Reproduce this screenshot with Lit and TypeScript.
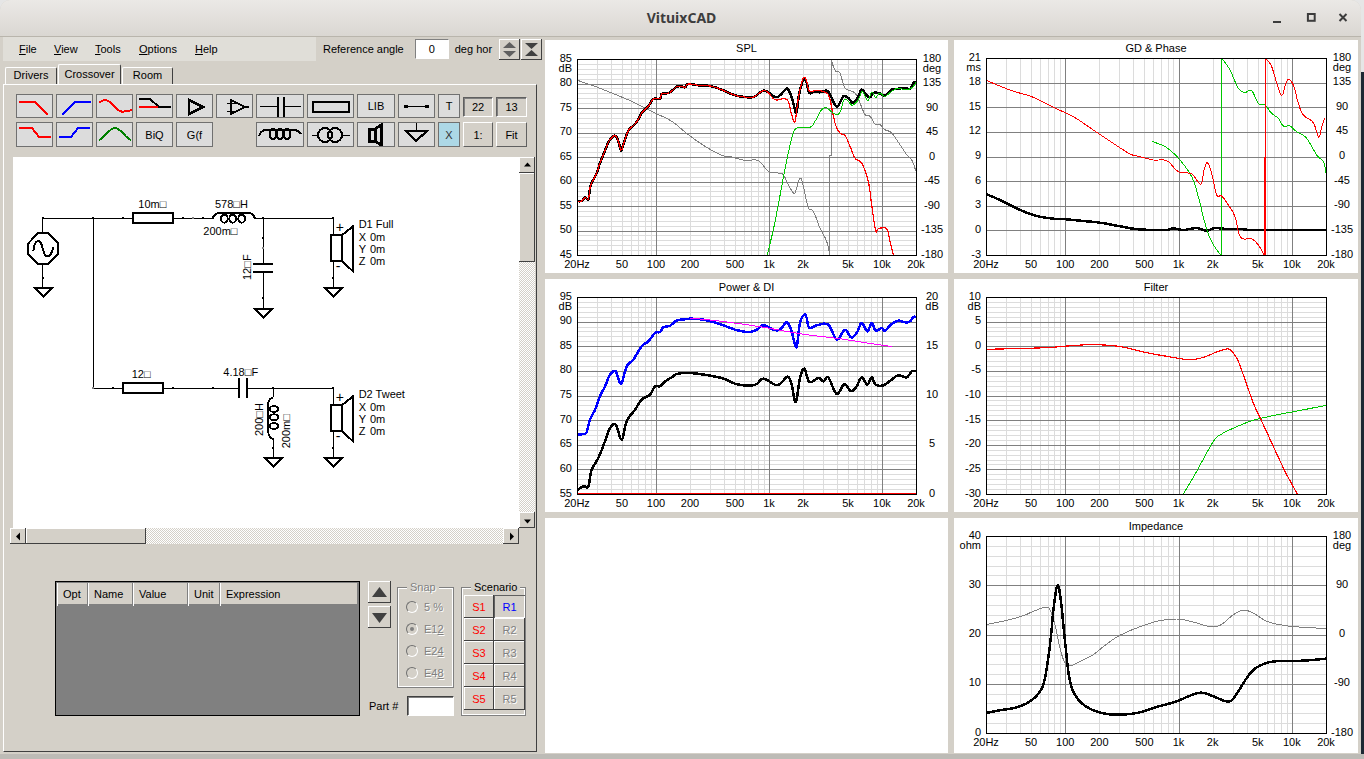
import { LitElement, html, svg, css } from "lit";
import { customElement } from "lit/decorators.js";

type P = number[];
interface Series { c: string; w: number; p: P[]; }
interface ChartCfg {
  title: string; x: number; y: number; w: number; h: number;
  px: number; py: number; pw: number; ph: number;
  left: string[]; leftUnit: string; right: string[]; rightUnit: string;
  major: number; minor: number; oz: number[]; series: Series[];
}

const RED = "#ff0000", GREEN = "#00c800", BLACK = "#000000", GRAY = "#808080", BLUE = "#0000ff", MAG = "#ff00ff";
const THICK = 2.5;

const splBlack: P[] = [[97,489],[110,489],[120,478],[130,484],[136,445],[145,425],[155,405],[165,375],[175,350],[185,325],[195,305],[210,293],[220,310],[228,338],[235,320],[247,285],[255,272],[270,258],[282,240],[292,222],[310,205],[325,183],[345,182],[350,168],[370,165],[385,155],[395,146],[410,145],[420,148],[430,138],[460,142],[495,144],[530,155],[570,172],[610,178],[630,175],[650,160],[665,160],[690,177],[705,172],[725,152],[735,165],[745,195],[754,225],[762,170],[775,125],[785,135],[793,165],[810,160],[825,163],[845,158],[855,170],[870,200],[880,203],[895,175],[910,180],[925,195],[940,175],[950,155],[965,172],[975,178],[985,165],[1000,165],[1020,172],[1040,155],[1060,152],[1080,150],[1095,153],[1105,135],[1113,135]];
const splRed: P[] = [...splBlack.slice(0, 38), [690,185],[715,182],[730,190],[740,230],[750,250],[760,180],[775,120],[785,130],[793,160],[815,157],[845,165],[855,185],[870,255],[885,285],[900,292],[915,325],[930,360],[945,370],[955,385],[970,430],[980,500],[992,578],[1000,572],[1025,572],[1035,610],[1045,650]];
const splGreen: P[] = [[667,650],[685,575],[700,500],[715,420],[730,345],[745,285],[760,268],[795,268],[810,250],[830,215],[845,210],[860,222],[878,230],[888,215],[897,185],[910,190],[922,202],[940,185],[952,160],[968,188],[980,162],[992,178],[1005,165],[1020,175],[1040,160],[1060,150],[1080,155],[1100,150],[1113,133]];
const splGray: P[] = [[97,127],[150,145],[200,165],[260,190],[320,220],[380,250],[430,290],[480,325],[530,352],[560,357],[600,367],[640,368],[670,400],[700,405],[715,410],[730,440],[745,465],[752,460],[765,420],[775,445],[790,510],[805,520],[825,570],[845,610],[854,650],[854,353],[858,353],[858,62],[870,97],[885,105],[900,150],[930,165],[945,195],[960,230],[975,235],[990,258],[1005,260],[1020,275],[1040,285],[1065,320],[1085,350],[1100,365],[1113,400]];

const gdRed: P[] = [[108,241],[180,270],[250,292],[310,322],[370,350],[430,390],[490,430],[540,462],[570,470],[610,480],[650,482],[685,515],[725,522],[752,553],[762,510],[772,488],[785,520],[800,585],[815,588],[835,615],[855,650],[872,712],[905,717],[925,735],[943,765]];
const gdRed2: P[] = [[947,175],[965,200],[985,265],[997,285],[1012,240],[1030,255],[1045,310],[1060,345],[1090,368],[1106,412],[1115,380],[1124,355]];
const gdGreen: P[] = [[605,424],[640,437],[665,455],[690,480],[725,530],[745,590],[765,670],[785,725],[812,765]];
const gdGreen2: P[] = [[818,178],[840,210],[865,265],[885,277],[905,272],[925,310],[945,315],[965,340],[985,355],[1000,378],[1020,378],[1040,395],[1070,415],[1100,465],[1120,485],[1128,518]];
const gdBlack: P[] = [[108,582],[150,600],[200,625],[250,645],[300,655],[350,658],[400,663],[450,668],[500,677],[550,686],[600,690],[650,690],[670,685],[700,690],[740,684],[770,692],[795,684],[830,687],[885,687],[900,690],[1128,690]];

const pwBlue: P[] = [[97,470],[115,468],[125,462],[135,425],[150,395],[165,355],[180,325],[195,290],[212,280],[228,318],[245,265],[265,245],[290,205],[310,190],[330,165],[345,162],[355,148],[375,143],[395,128],[420,124],[440,122],[480,126],[530,140],[570,155],[610,162],[635,155],[655,142],[685,155],[705,155],[725,133],[740,160],[754,208],[765,135],[778,110],[785,120],[793,150],[815,142],[850,140],[875,185],[900,155],[918,178],[935,165],[950,135],[967,160],[980,135],[992,158],[1010,150],[1020,158],[1040,138],[1060,128],[1080,133],[1095,130],[1105,117],[1113,117]];
const pwMag: P[] = [[435,120],[530,130],[650,147],[770,168],[890,183],[1000,200],[1040,205]];
const pwBlack: P[] = [[97,637],[115,625],[130,625],[140,575],[160,540],[180,490],[195,450],[212,440],[230,485],[245,430],[270,395],[290,365],[315,350],[330,325],[345,325],[360,310],[380,298],[395,288],[430,285],[470,289],[530,300],[570,317],[610,323],[635,318],[655,302],[690,320],[705,318],[728,296],[740,320],[752,372],[765,300],[778,272],[793,312],[820,300],[835,310],[850,298],[875,348],[898,318],[918,340],[935,325],[950,298],[967,320],[980,298],[992,320],[1015,322],[1040,305],[1060,292],[1085,298],[1100,280],[1113,280]];

const fRed: P[] = [[108,214],[190,212],[290,209],[340,205],[420,200],[490,203],[540,212],[600,226],[680,240],[720,245],[760,238],[800,222],[825,214],[840,215],[860,240],[880,290],[910,375],[940,440],[970,505],[1005,580],[1042,648]];
const fGreen: P[] = [[700,648],[740,580],[790,490],[815,468],[840,455],[900,430],[950,417],[1020,403],[1130,382]];

const zBlack: P[] = [[108,585],[150,577],[200,568],[240,550],[270,520],[285,480],[300,380],[312,260],[323,202],[333,250],[345,370],[360,490],[385,545],[420,572],[460,586],[505,590],[560,585],[620,567],[680,550],[720,533],[755,524],[790,535],[825,549],[845,547],[865,520],[890,480],[915,452],[950,435],[990,429],[1060,428],[1128,422]];
const zGray: P[] = [[108,320],[170,307],[220,293],[250,280],[285,268],[300,275],[315,320],[330,390],[345,435],[365,442],[400,425],[430,410],[470,378],[510,352],[560,330],[620,310],[680,303],[730,312],[775,325],[810,322],[850,290],[880,277],[910,285],[950,310],[1000,322],[1060,328],[1128,331]];

const CHARTS: ChartCfg[] = [
  { title: "SPL", x: 545, y: 40, w: 403, h: 233, px: 577, py: 59, pw: 339, ph: 196,
    left: ["85","80","75","70","65","60","55","50","45"], leftUnit: "dB",
    right: ["180","135","90","45","0","-45","-90","-135","-180"], rightUnit: "deg",
    major: 8, minor: 5, oz: [545,38],
    series: [{c:GRAY,w:1,p:splGray},{c:BLACK,w:THICK,p:splBlack},{c:RED,w:1.2,p:splRed},{c:GREEN,w:1,p:splGreen}] },
  { title: "GD & Phase", x: 954, y: 40, w: 404, h: 233, px: 986, py: 58, pw: 340, ph: 197,
    left: ["21","18","15","12","9","6","3","0","-3"], leftUnit: "ms",
    right: ["180","135","90","45","0","-45","-90","-135","-180"], rightUnit: "deg",
    major: 8, minor: 1, oz: [950,0],
    series: [
      {c:BLACK,w:THICK,p:gdBlack},
      {c:GREEN,w:1,p:gdGreen},{c:GREEN,w:1.2,p:[[814.5,765],[814.5,175]]},{c:GREEN,w:1,p:gdGreen2},
      {c:RED,w:1,p:gdRed},{c:RED,w:1.2,p:[[946.5,470],[946.5,175]]},{c:RED,w:2,p:[[945,765],[945,470]]},{c:RED,w:1,p:gdRed2},
    ] },
  { title: "Power & DI", x: 545, y: 279, w: 403, h: 233, px: 577, py: 297, pw: 339, ph: 197,
    left: ["95","90","85","80","75","70","65","60","55"], leftUnit: "dB",
    right: ["20","","15","","10","","5","","0"], rightUnit: "dB",
    major: 8, minor: 5, oz: [545,278],
    series: [{c:RED,w:2,p:[[97,647],[1113,647]]},{c:BLACK,w:THICK,p:pwBlack},{c:BLUE,w:THICK,p:pwBlue},{c:MAG,w:1,p:pwMag}] },
  { title: "Filter", x: 954, y: 279, w: 404, h: 233, px: 986, py: 297, pw: 340, ph: 197,
    left: ["10","5","0","-5","-10","-15","-20","-25","-30"], leftUnit: "dB",
    right: [], rightUnit: "",
    major: 8, minor: 5, oz: [950,278],
    series: [{c:GREEN,w:1,p:fGreen},{c:RED,w:1.2,p:fRed}] },
  { title: "Impedance", x: 954, y: 518, w: 404, h: 235, px: 986, py: 536, pw: 340, ph: 197,
    left: ["40","30","20","10","0"], leftUnit: "ohm",
    right: ["180","90","0","-90","-180"], rightUnit: "deg",
    major: 4, minor: 5, oz: [950,518],
    series: [{c:GRAY,w:1,p:zGray},{c:BLACK,w:THICK,p:zBlack}] },
];

const MINOR_F = [30,40,50,60,70,80,90,200,300,400,500,600,700,800,900,2000,3000,4000,5000,6000,7000,8000,9000];
const MAJOR_F = [100,1000,10000];
const XLAB: [string, number][] = [["20Hz",20],["50",50],["100",100],["200",200],["500",500],["1k",1000],["2k",2000],["5k",5000],["10k",10000],["20k",20000]];

/* Catmull-Rom resampling of traced points; vertical phase wraps stay straight. */
function smooth(pts: P[]): P[] {
  const runs: P[][] = [];
  let cur: P[] = [pts[0]];
  for (let i = 1; i < pts.length; i++) {
    const a = pts[i - 1], b = pts[i];
    if (Math.abs(b[0] - a[0]) < 5 && Math.abs(b[1] - a[1]) > 100) { runs.push(cur); cur = [b]; } else cur.push(b);
  }
  runs.push(cur);
  const out: P[] = [];
  for (const r of runs) {
    for (let i = 0; i < r.length - 1; i++) {
      const p0 = r[Math.max(0, i - 1)], p1 = r[i], p2 = r[i + 1], p3 = r[Math.min(r.length - 1, i + 2)];
      for (let k = 0; k < 5; k++) {
        const t = k / 5, t2 = t * t, t3 = t2 * t;
        const f = (j: number) => 0.5 * (2 * p1[j] + (p2[j] - p0[j]) * t + (2 * p0[j] - 5 * p1[j] + 4 * p2[j] - p3[j]) * t2 + (3 * p1[j] - p0[j] - 3 * p2[j] + p3[j]) * t3);
        out.push([f(0), f(1)]);
      }
    }
    out.push(r[r.length - 1]);
  }
  return out;
}

function chart(c: ChartCfg) {
  const fx = (f: number) => Math.round(c.px + (c.pw * Math.log10(f / 20)) / 3) + 0.5;
  const right = c.px + c.pw, bottom = c.py + c.ph;
  const hy = (i: number) => Math.round(c.py + (c.ph * i) / c.major) + 0.5;
  const minors: number[] = [];
  if (c.minor > 1) for (let i = 0; i < c.major * c.minor; i++) if (i % c.minor) minors.push(Math.round(c.py + (c.ph * i) / (c.major * c.minor)) + 0.5);
  return html`<div class="panel">
    <svg class="plot" width=${c.w} height=${c.h} viewBox="${c.x} ${c.y} ${c.w} ${c.h}">
      <text class="t" x=${c.px + c.pw / 2} y=${c.y + 12} text-anchor="middle">${c.title}</text>
      <g shape-rendering="crispEdges" stroke-width="1">
        ${minors.map((y) => svg`<line x1=${c.px} x2=${right} y1=${y} y2=${y} stroke="#dcdcdc"/>`)}
        ${MINOR_F.map((f) => svg`<line x1=${fx(f)} x2=${fx(f)} y1=${c.py} y2=${bottom} stroke="#dcdcdc"/>`)}
        ${Array.from({ length: c.major - 1 }, (_, i) => svg`<line x1=${c.px} x2=${right} y1=${hy(i + 1)} y2=${hy(i + 1)} stroke="#808080"/>`)}
        ${MAJOR_F.map((f) => svg`<line x1=${fx(f)} x2=${fx(f)} y1=${c.py} y2=${bottom} stroke="#808080"/>`)}
      </g>
      ${c.series.map((s) => svg`<polyline fill="none" stroke=${s.c} stroke-width=${s.w} stroke-linejoin="round" shape-rendering="crispEdges"
        points=${smooth(s.p).map((p) => `${(c.oz[0] + p[0] / 3).toFixed(1)},${(c.oz[1] + p[1] / 3).toFixed(1)}`).join(" ")}/>`)}
      <rect x=${c.px + 0.5} y=${c.py + 0.5} width=${c.pw} height=${c.ph} fill="none" stroke="#000" shape-rendering="crispEdges"/>
      ${c.left.map((t, i) => svg`<text class="t" x=${c.px - 5} y=${c.py + (c.ph * i) / (c.left.length - 1) + 2.5} text-anchor="end">${t}</text>`)}
      <text class="t" x=${c.px - 5} y=${c.py + 12.5} text-anchor="end">${c.leftUnit}</text>
      ${c.right.map((t, i) => svg`<text class="t" x=${right + 16} y=${c.py + (c.ph * i) / (c.right.length - 1) + 2.5} text-anchor="middle">${t}</text>`)}
      <text class="t" x=${right + 16} y=${c.py + 12.5} text-anchor="middle">${c.rightUnit}</text>
      ${XLAB.map(([t, f]) => svg`<text class="t" x=${c.px + (c.pw * Math.log10(f / 20)) / 3} y=${bottom + 13} text-anchor="middle">${t}</text>`)}
    </svg>
  </div>`;
}

const ic = (body: unknown, w = 37, h = 24) => html`<svg class="ic" width=${w} height=${h} viewBox="0 0 ${w} ${h}" fill="none" stroke-width="2" shape-rendering="crispEdges">${body}</svg>`;
const line = (pts: string, col: string, w = 2) => svg`<polyline points=${pts} fill="none" stroke=${col} stroke-width=${w}/>`;

const TOOL_ROW1 = [
  ic(line("3,8 19,8 32,21", "#f00")),
  ic(line("6,21 19,8 35,8", "#00f")),
  ic(svg`<path d="M3 9C8 4 13 6 18 12S25 19 36 16" stroke="#f00"/>`),
  ic(svg`${line("3,5 14,5 23,13 35,13", "#000")}${line("3,13 22,13", "#f00")}`),
  ic(svg`<polygon points="13,6 27,13 13,20" stroke="#000" stroke-width="2.4"/>`),
  ic(svg`<polygon points="15,6 29,13 15,20" stroke="#000" stroke-width="2"/>${line("29,13 33,13", "#000")}${line("11,9 20,9", "#000", 1)}${line("11,17 20,17", "#000", 1)}${line("15,5 15,13", "#000", 1)}${line("15,14 15,21", "#000", 1)}`),
  ic(svg`${line("4,12.5 21,12.5", "#000", 1)}${line("28,12.5 45,12.5", "#000", 1)}${line("21.5,3 21.5,23", "#000")}${line("28,3 28,23", "#000")}`, 48, 24),
  ic(svg`<rect x="6" y="8" width="36" height="10" stroke="#000"/>`, 47, 24),
];
const TOOL_ROW2 = [
  ic(line("3,5 16,5 23,14 35,14", "#f00")),
  ic(line("3,14 15,14 22,5 34,5", "#00f")),
  ic(svg`<path d="M3 17C9 15 13 5 19 5S29 15 35 17" stroke="#008000"/>`),
];

const speaker = (dy: number) => svg`
  <line x1="970" y1=${175 + dy} x2="970" y2=${225 + dy} stroke="#000" stroke-width="3"/>
  <rect x="964" y=${226 + dy} width="31" height="77" fill="#fff" stroke="#000" stroke-width="6"/>
  <polygon points="995,${226 + dy} 1029,${199 + dy} 1029,${334 + dy} 995,${303 + dy}" fill="#fff" stroke="#000" stroke-width="6"/>
  <line x1="970" y1=${303 + dy} x2="970" y2=${380 + dy} stroke="#000" stroke-width="3"/>
  <text class="pm" x="977" y=${217 + dy}>+</text>
  <text class="pm" x="977" y=${334 + dy}>-</text>`;
const ground = (x: number, y: number) => svg`<polygon points="${x - 24},${y} ${x + 26},${y} ${x},${y + 25}" fill="none" stroke="#000" stroke-width="6"/>`;
const dot = (x: number, y: number, c = "#000") => svg`<rect x=${x - 3} y=${y - 3} width="6" height="6" fill=${c}/>`;
const wire = (x1: number, y1: number, x2: number, y2: number) => svg`<line x1=${x1} y1=${y1} x2=${x2} y2=${y2} stroke="#000" stroke-width="3"/>`;

function schematic() {
  return html`<svg class="sch" width="505" height="371" viewBox="9 -9 1515 1113">
    <g shape-rendering="crispEdges">
      ${wire(98,175,368,175)}${wire(490,175,610,175)}${wire(735,175,970,175)}
      <rect x="369" y="160" width="121" height="29" fill="#fff" stroke="#000" stroke-width="6"/>
      ${wire(250,175,250,685)}${wire(250,685,338,685)}
      <rect x="339" y="670" width="121" height="29" fill="#fff" stroke="#000" stroke-width="6"/>
      ${wire(460,685,688,685)}${wire(710,685,970,685)}
      <line x1="688" y1="655" x2="688" y2="713" stroke="#000" stroke-width="6"/>
      <line x1="710" y1="655" x2="710" y2="713" stroke="#000" stroke-width="6"/>
      ${wire(98,175,98,220)}${wire(98,310,98,382)}
      <polygon points="83,220 115,220 145,250 145,282 115,311 83,311 55,282 55,250" fill="#fff" stroke="#000" stroke-width="6"/>
      <path d="M70 272C75 235 92 235 98 265S120 300 130 262" fill="none" stroke="#000" stroke-width="6"/>
      ${ground(100,385)}
      <path d="M608 175C612 160 628 156 640 160L712 160C722 158 730 162 735 175" fill="none" stroke="#000" stroke-width="6"/>
      <ellipse cx="643" cy="176" rx="10" ry="12" fill="none" stroke="#000" stroke-width="6"/>
      <ellipse cx="668" cy="176" rx="10" ry="12" fill="none" stroke="#000" stroke-width="6"/>
      <ellipse cx="695" cy="176" rx="10" ry="12" fill="none" stroke="#000" stroke-width="6"/>
      ${wire(760,175,760,312)}${wire(760,336,760,445)}
      <line x1="730" y1="312" x2="790" y2="312" stroke="#000" stroke-width="6"/>
      <line x1="730" y1="336" x2="790" y2="336" stroke="#000" stroke-width="6"/>
      ${ground(760,447)}
      ${speaker(0)}${ground(970,385)}
      ${speaker(510)}${ground(970,895)}
      ${wire(790,685,790,712)}${wire(790,838,790,893)}
      <path d="M790 712C778 716 773 725 775 738L775 805C773 820 778 834 790 838" fill="none" stroke="#000" stroke-width="6"/>
      <ellipse cx="792" cy="747" rx="13" ry="9" fill="none" stroke="#000" stroke-width="6"/>
      <ellipse cx="792" cy="772" rx="13" ry="9" fill="none" stroke="#000" stroke-width="6"/>
      <ellipse cx="792" cy="798" rx="13" ry="9" fill="none" stroke="#000" stroke-width="6"/>
      ${ground(790,895)}
      ${[[98,175],[250,175],[340,175],[518,175],[580,175],[760,175],[970,175],[760,235],[760,415],[98,355],[970,355],[308,685],[488,685],[608,685],[790,685],[970,685],[970,865],[790,865]].map((p) => dot(p[0], p[1]))}
      ${[[550,175],[760,265],[250,685]].map((p) => dot(p[0], p[1], "#808080"))}
    </g>
    <text class="s" x="385" y="143">10m□</text>
    <text class="s" x="615" y="143">578□H</text>
    <text class="s" x="580" y="225">200m□</text>
    <text class="s" x="365" y="653">12□</text>
    <text class="s" x="640" y="647">4.18□F</text>
    <text class="s" transform="translate(722 360) rotate(-90)">12□F</text>
    <text class="s" transform="translate(760 828) rotate(-90)">200□H</text>
    <text class="s" transform="translate(840 865) rotate(-90)">200m□</text>
    ${[0, 510].map((d, i) => svg`
      <text class="s" x="1046" y=${205 + d}>${i ? "D2 Tweet" : "D1 Full"}</text>
      <text class="s" x="1046" y=${243 + d}>X</text><text class="s" x="1080" y=${243 + d}>0m</text>
      <text class="s" x="1046" y=${279 + d}>Y</text><text class="s" x="1080" y=${279 + d}>0m</text>
      <text class="s" x="1046" y=${315 + d}>Z</text><text class="s" x="1080" y=${315 + d}>0m</text>`)}
  </svg>`;
}

const tri = (dir: string, col = "#000", w = 15, h = 15) => {
  const pts: Record<string, string> = {
    up: `${w / 2},${h / 2 - 3} ${w / 2 + 3.5},${h / 2 + 1} ${w / 2 - 3.5},${h / 2 + 1}`,
    down: `${w / 2},${h / 2 + 3} ${w / 2 + 3.5},${h / 2 - 1} ${w / 2 - 3.5},${h / 2 - 1}`,
    left: `${w / 2 - 2.5},${h / 2} ${w / 2 + 1.5},${h / 2 - 4} ${w / 2 + 1.5},${h / 2 + 4}`,
    right: `${w / 2 + 2.5},${h / 2} ${w / 2 - 1.5},${h / 2 - 4} ${w / 2 - 1.5},${h / 2 + 4}`,
  };
  return html`<svg width=${w} height=${h}><polygon points=${pts[dir]} fill=${col}/></svg>`;
};

@customElement("app-root")
export class AppRoot extends LitElement {
  static styles = css`
    :host { display: block; width: 1364px; height: 759px; overflow: hidden; font: 11px "Liberation Sans", Arial, sans-serif; color: #000; }
    * { box-sizing: border-box; }
    .desk { width: 1364px; height: 759px; background: linear-gradient(#e6e6e6 0 72px, #1d2833 72px 754px, #bdbbb6 754px); }
    .win { width: 1361px; height: 754px; border-radius: 10px 10px 0 0; overflow: hidden; background: #d4d0c8; }
    .title { height: 37px; background: linear-gradient(#ebe9e6, #dad7d2); border-bottom: 1px solid #b9b5ac; display: flex; align-items: center; }
    .title b { flex: 1; text-align: center; font: bold 14px "Noto Sans", "Open Sans", sans-serif; color: #3d3d3d; margin-left: 91px; margin-top: -1px; }
    .wbtns { display: flex; gap: 22px; padding-right: 13px; align-items: center; }
    .wmin { margin-right: 2px; }
    .client { display: flex; height: 717px; }
    .left { width: 545px; flex: none; }
    .right { flex: 1; padding-top: 3px; display: grid; grid-template-columns: 403px 404px; grid-template-rows: 233px 233px 235px; gap: 6px; align-content: start; }
    .panel { background: #fff; overflow: hidden; }
    .plot { display: block; }
    .t { font: 11px "Liberation Sans", Arial, sans-serif; fill: #000; }
    .s { font: 33px "Liberation Sans", Arial, sans-serif; fill: #000; }
    .pm { font: 42px "Liberation Sans", Arial, sans-serif; fill: #000; }
    .mrow { height: 24px; display: flex; align-items: stretch; }
    .menubar { margin-left: 3px; width: 313px; background: #e0ded8; display: flex; align-items: center; height: 24px; padding-left: 16px; }
    .menubar span { display: block; }
    .m1 { width: 35px; } .m2 { width: 41px; } .m3 { width: 44px; } .m4 { width: 56px; }
    .ref { display: flex; align-items: center; padding-left: 7px; height: 24px; }
    .refin { width: 34px; height: 20px; margin: 0 6px 0 11px; background: #fff; text-align: center; line-height: 19px; border: 1px solid; border-color: #808080 #fff #fff #808080; }
    .hbtn { width: 21px; height: 21px; margin-left: 1px; background: #d4d0c8; box-shadow: inset -1px -1px #404040, inset 1px 1px #fff; display: flex; align-items: center; justify-content: center; }
    .ref .deg { margin-right: 6px; }
    .tabs { height: 23px; display: flex; align-items: flex-end; padding-left: 5px; gap: 1px; }
    .tab { height: 17px; padding-bottom: 2px; border: 1px solid; border-color: #fff #404040 transparent #fff; border-bottom: 0; border-radius: 2px 2px 0 0; display: flex; align-items: center; justify-content: center; }
    .tab.a { height: 20px; }
    .w1 { width: 52px; } .w2 { width: 63px; } .w3 { width: 51px; }
    .pane { margin-left: 3px; width: 534px; height: 668px; border: 1px solid; border-color: #fff #404040 #404040 #fff; padding-top: 9px; }
    .tools { margin-left: 12px; display: grid; grid-template-columns: repeat(6, 37px) 48px 47px 38px 37px 22px 30px 31px; grid-template-rows: 24px 25px; column-gap: 3px; row-gap: 4px; }
    .tb { background: #dcdcdc; border: 1px solid #707070; display: flex; align-items: center; justify-content: center; overflow: hidden; }
    .tb.x { background: #add8e6; color: #333; }
    .ic { display: block; flex: none; margin: -1px; }
    .sunk { background: #d4d0c8; height: 20px; border: 1px solid; border-color: #606060 #fff #fff #606060; box-shadow: inset 1px 1px #808080; display: flex; align-items: center; justify-content: center; margin-top: 3px; }
    .rais { background: #d4d0c8; border: 1px solid; border-color: #fff #606060 #606060 #fff; display: flex; align-items: center; justify-content: center; }
    .view { margin: 10px 0 0 6px; display: grid; grid-template-columns: 509px 16px; grid-template-rows: 371px 16px; width: 525px; }
    .canvas { margin-left: 3px; background: #fff; overflow: hidden; }
    .sch { display: block; }
    .vs { display: flex; flex-direction: column; }
    .hs { display: flex; }
    .sbtn { background: #d4d0c8; box-shadow: inset -1px -1px #404040, inset 1px 1px #fff; width: 16px; height: 16px; flex: none; display: flex; align-items: center; justify-content: center; }
    .thumbh { width: 120px; background: #d4d0c8; box-shadow: inset -1px -1px #404040, inset 1px 1px #fff; flex: none; }
    .thumbv { height: 89px; background: #d4d0c8; box-shadow: inset -1px -1px #404040, inset 1px 1px #fff; flex: none; }
    .track { flex: 1; background: repeating-conic-gradient(#fff 0 25%, #d4d0c8 0 50%) 0 0 / 2px 2px; }
    .lower { margin: 37px 0 0 51px; display: flex; align-items: flex-start; }
    .table { width: 305px; height: 135px; background: #808080; border: 1px solid #000; padding: 1px; }
    .thead { height: 21px; background: #d4d0c8; display: grid; grid-template-columns: 31px 45px 55px 32px 1fr; }
    .thead div { border-left: 1px solid #fff; border-right: 1px solid #808080; padding-left: 5px; line-height: 23px; }
    .mid { width: 86px; margin-left: 8px; }
    .midtop { display: flex; }
    .arrows { width: 23px; margin-right: 6px; }
    .abtn { width: 23px; height: 22px; background: #d4d0c8; box-shadow: inset -1px -1px #404040, inset 1px 1px #fff; display: flex; align-items: center; justify-content: center; margin-bottom: 3px; }
    .group { position: relative; border: 1px solid #808080; box-shadow: 0 0 0 1px #fff inset; }
    .legend { position: absolute; top: -7px; left: 9px; background: #d4d0c8; padding: 0 3px; line-height: 12px; }
    .dis { color: #808080; text-shadow: 1px 1px 0 #fff; }
    .snap { width: 57px; height: 101px; margin-top: 6px; padding-top: 8px; padding-left: 8px; }
    .ritem { display: flex; align-items: center; height: 22px; gap: 6px; }
    .radio { width: 12px; height: 12px; border-radius: 50%; border: 1px solid; border-color: #707070 #fff #fff #707070; flex: none; display: flex; align-items: center; justify-content: center; }
    .radio.on::after { content: ""; width: 4px; height: 4px; border-radius: 50%; background: #808080; }
    .part { display: flex; align-items: center; justify-content: space-between; margin-top: 8px; height: 19px; padding-left: 1px; white-space: nowrap; }
    .partin { width: 47px; flex: none; height: 20px; background: #fff; border: 1px solid; border-color: #404040 #fff #fff #404040; box-shadow: inset 1px 1px #808080; }
    .scen { width: 65px; height: 129px; margin: 6px 0 0 7px; padding: 7px 2px 0 2px; }
    .sgrid { display: grid; grid-template-columns: 30px 31px; grid-auto-rows: 23px; }
    .sb { background: #d4d0c8; box-shadow: inset -1px -1px #404040, inset 1px 1px #fff; display: flex; align-items: center; justify-content: center; color: #f00; }
    .sb.dis { color: #808080; }
    .sb.on { box-shadow: inset 1px 1px #606060, inset -1px -1px #fff; color: #00f; }
  `;

  render() {
    const th = ["Opt", "Name", "Value", "Unit", "Expression"];
    const radios: [unknown, boolean][] = [["5 %", false], [html`E1<u>2</u>`, true], [html`E2<u>4</u>`, false], [html`E4<u>8</u>`, false]];
    return html`<div class="desk"><div class="win">
      <div class="title"><b>VituixCAD</b>
        <div class="wbtns">
          <svg class="wmin" width="10" height="10" viewBox="0 0 10 10"><rect x="1" y="8" width="8" height="2" fill="#3c3c3c"/></svg>
          <svg width="10" height="10" viewBox="0 0 10 10"><rect x="1.9" y="1" width="6.8" height="6.8" fill="none" stroke="#3c3c3c" stroke-width="2"/></svg>
          <svg width="10" height="10" viewBox="0 0 10 10"><path d="M1.5 1L8.5 8M8.5 1L1.5 8" stroke="#3c3c3c" stroke-width="2"/></svg>
        </div>
      </div>
      <div class="client">
        <div class="left">
          <div class="mrow">
            <div class="menubar">
              <span class="m1"><u>F</u>ile</span><span class="m2"><u>V</u>iew</span><span class="m3"><u>T</u>ools</span><span class="m4"><u>O</u>ptions</span><span><u>H</u>elp</span>
            </div>
            <div class="ref">
              <span>Reference angle</span><div class="refin">0</div><span class="deg">deg hor</span>
              <div class="hbtn"><svg width="15" height="17" viewBox="0 0 15 17"><polygon points="7.5,1 14,7 1,7" fill="#606060"/><polygon points="7.5,16 14,10 1,10" fill="#606060"/></svg></div>
              <div class="hbtn"><svg width="15" height="17" viewBox="0 0 15 17"><polygon points="1,2 14,2 7.5,8" fill="#404040"/><polygon points="1,15 14,15 7.5,9" fill="#404040"/></svg></div>
            </div>
          </div>
          <div class="tabs">
            <div class="tab w1">Drivers</div><div class="tab a w2">Crossover</div><div class="tab w3">Room</div>
          </div>
          <div class="pane">
            <div class="tools">
              ${TOOL_ROW1.map((i) => html`<div class="tb">${i}</div>`)}
              <div class="tb">LIB</div>
              <div class="tb">${ic(svg`${line("8,12.5 29,12.5", "#000", 1)}<circle cx="8" cy="12.5" r="2" fill="#000"/><circle cx="29" cy="12.5" r="2" fill="#000"/>`)}</div>
              <div class="tb">T</div>
              <div class="sunk">22</div><div class="sunk">13</div>
              ${TOOL_ROW2.map((i) => html`<div class="tb">${i}</div>`)}
              <div class="tb">BiQ</div><div class="tb">G(f</div>
              <div></div>
              <div class="tb">${ic(svg`<path d="M3 14C5 8 10 7 14 8L33 8C38 7 42 8 45 12" stroke="#000"/><ellipse cx="17" cy="12" rx="3.5" ry="5" stroke="#000"/><ellipse cx="24" cy="12" rx="3.5" ry="5" stroke="#000"/><ellipse cx="31" cy="12" rx="3.5" ry="5" stroke="#000"/>`, 48, 25)}</div>
              <div class="tb">${ic(svg`${line("5,13 11,13", "#000", 1)}${line("36,13 43,13", "#000", 1)}<circle cx="18" cy="13" r="7" stroke="#000"/><circle cx="28" cy="13" r="7" stroke="#000"/>`, 47, 25)}</div>
              <div class="tb">${ic(svg`<rect x="12" y="7" width="6" height="12" stroke="#000" stroke-width="3"/><polygon points="18,7 24,3 24,23 18,19" stroke="#000" stroke-width="3"/>`, 38, 25)}</div>
              <div class="tb">${ic(svg`${line("18,1 18,9", "#000", 1)}<polygon points="8,9 29,9 18,19" stroke="#000" stroke-width="2.2"/>`, 37, 25)}</div>
              <div class="tb x">X</div>
              <div class="rais">1:</div><div class="rais">Fit</div>
            </div>
            <div class="view">
              <div class="canvas">${schematic()}</div>
              <div class="vs"><div class="sbtn">${tri("up")}</div><div class="thumbv"></div><div class="track"></div><div class="sbtn">${tri("down")}</div></div>
              <div class="hs"><div class="sbtn">${tri("left")}</div><div class="thumbh"></div><div class="track"></div><div class="sbtn">${tri("right")}</div></div>
            </div>
            <div class="lower">
              <div class="table"><div class="thead">${th.map((t) => html`<div>${t}</div>`)}</div></div>
              <div class="mid">
                <div class="midtop">
                  <div class="arrows">
                    <div class="abtn"><svg width="15" height="11" viewBox="0 0 15 11"><polygon points="7.5,0 15,10 0,10" fill="#404040"/></svg></div>
                    <div class="abtn"><svg width="15" height="11" viewBox="0 0 15 11"><polygon points="7.5,11 15,1 0,1" fill="#404040"/></svg></div>
                  </div>
                  <div class="group snap"><div class="legend dis">Snap</div>
                    ${radios.map(([t, on]) => html`<div class="ritem"><div class="radio ${on ? "on" : ""}"></div><span class="dis">${t}</span></div>`)}
                  </div>
                </div>
                <div class="part"><span>Part #</span><div class="partin"></div></div>
              </div>
              <div class="group scen"><div class="legend">Scenario</div>
                <div class="sgrid">
                  ${[1, 2, 3, 4, 5].map((n) => html`<div class="sb">S${n}</div><div class="sb ${n === 1 ? "on" : "dis"}">R${n}</div>`)}
                </div>
              </div>
            </div>
          </div>
        </div>
        <div class="right">
          ${chart(CHARTS[0])}${chart(CHARTS[1])}${chart(CHARTS[2])}${chart(CHARTS[3])}
          <div class="panel"></div>
          ${chart(CHARTS[4])}
        </div>
      </div>
    </div></div>`;
  }
}
